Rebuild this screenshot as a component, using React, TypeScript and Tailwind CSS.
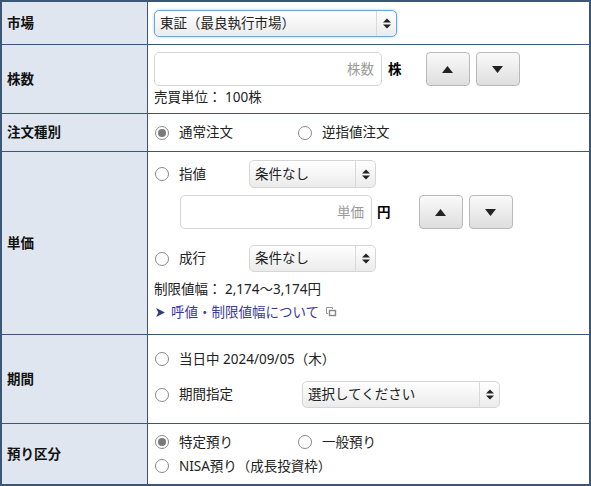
import clsx from 'clsx';

const font = { fontFamily: '"Noto Sans", "Noto Sans CJK JP", sans-serif' };

function UpDown() {
  return (
    <svg width="8" height="11" viewBox="0 0 8 11">
      <path d="M0 4.5 L4 0.5 L8 4.5 Z" fill="#222" />
      <path d="M0 6.5 L4 10.5 L8 6.5 Z" fill="#222" />
    </svg>
  );
}

function Select({ label, className, focused }: { label: string; className?: string; focused?: boolean }) {
  return (
    <div
      className={clsx(
        'flex items-stretch rounded-[5px] border bg-linear-to-b from-white to-[#ebebeb] text-[13.5px] text-[#222]',
        focused ? 'border-[#6aa7dd] shadow-[0_0_3px_#a6cdf0]' : 'border-[#d6d6d6]',
        className
      )}
    >
      <span className="flex flex-1 items-center pl-[5px]">{label}</span>
      <span className="flex w-[20px] items-center justify-center border-l border-[#d9d9d9]">
        <UpDown />
      </span>
    </div>
  );
}

function Radio({ checked }: { checked?: boolean }) {
  return (
    <span className="flex h-[14px] w-[14px] shrink-0 items-center justify-center rounded-full border border-[#8a8a8a] bg-white">
      {checked && <span className="h-[8px] w-[8px] rounded-full bg-[#7a7a7a]" />}
    </span>
  );
}

function RadioLabel({ checked, text }: { checked?: boolean; text: string }) {
  return (
    <span className="flex items-center gap-[10px]">
      <Radio checked={checked} />
      <span>{text}</span>
    </span>
  );
}

function TextBox({ placeholder, className }: { placeholder: string; className?: string }) {
  return (
    <div
      className={clsx(
        'flex h-[34px] items-center justify-end rounded-[5px] border border-[#d4d4d4] bg-white pr-[7px] text-[13.5px] text-[#9a9a9a]',
        className
      )}
    >
      {placeholder}
    </div>
  );
}

function Arrow({ up }: { up?: boolean }) {
  return (
    <div className="flex h-[34px] w-[44px] items-center justify-center rounded-[4px] border border-[#b9b9b9] bg-linear-to-b from-[#fafafa] to-[#dedede]">
      <svg width="11" height="7" viewBox="0 0 11 7">
        {up ? <path d="M0 7 L5.5 0 L11 7 Z" fill="#222" /> : <path d="M0 0 L5.5 7 L11 0 Z" fill="#222" />}
      </svg>
    </div>
  );
}

function Row({ label, height, children, last }: { label: string; height: string; children: React.ReactNode; last?: boolean }) {
  return (
    <div className={clsx('flex', height, !last && 'border-b border-[#3b5775]')}>
      <div className="flex w-[146px] shrink-0 items-center border-r border-[#3b5775] bg-[#dfe6f0] pl-[5px] text-[13.5px] font-bold text-[#111]">
        {label}
      </div>
      <div className="flex-1">{children}</div>
    </div>
  );
}

export default function App() {
  return (
    <div style={font} className="h-[486px] w-[591px] border-2 border-[#3b5775] bg-white text-[13.5px] text-[#222]">
      <Row label="市場" height="h-[43px]">
        <div className="pl-[6px] pt-[8px]">
          <Select label="東証（最良執行市場）" className="h-[27px] w-[243px]" focused />
        </div>
      </Row>

      <Row label="株数" height="h-[69px]">
        <div className="pl-[6px] pt-[7px]">
          <div className="flex items-center">
            <TextBox placeholder="株数" className="w-[228px]" />
            <span className="ml-[6px] font-bold text-black">株</span>
            <div className="ml-[24px] flex gap-[6px]">
              <Arrow up />
              <Arrow />
            </div>
          </div>
          <div className="mt-[2px] leading-[18px]">売買単位： 100株</div>
        </div>
      </Row>

      <Row label="注文種別" height="h-[38px]">
        <div className="flex h-full items-center pl-[7px]">
          <span className="w-[143px]">
            <RadioLabel checked text="通常注文" />
          </span>
          <RadioLabel text="逆指値注文" />
        </div>
      </Row>

      <Row label="単価" height="h-[183px]">
        <div className="pl-[7px] pt-[8px]">
          <div className="flex items-center">
            <span className="w-[94px]">
              <RadioLabel text="指値" />
            </span>
            <Select label="条件なし" className="h-[28px] w-[127px]" />
          </div>
          <div className="ml-[25px] mt-[7px] flex items-center">
            <TextBox placeholder="単価" className="w-[192px]" />
            <span className="ml-[5px] font-bold text-black">円</span>
            <div className="ml-[28px] flex gap-[6px]">
              <Arrow up />
              <Arrow />
            </div>
          </div>
          <div className="mt-[16px] flex items-center">
            <span className="w-[94px]">
              <RadioLabel text="成行" />
            </span>
            <Select label="条件なし" className="h-[27px] w-[127px]" />
          </div>
          <div className="-ml-[1px] mt-[8px] leading-[18px]">制限値幅： 2,174～3,174円</div>
          <div className="mt-[5px] flex items-center gap-[5px] leading-[18px] text-[#3a3a9a]">
            <svg width="11" height="11" viewBox="0 0 10 10">
              <path d="M1 1 L9 5 L1 9 L3 5 Z" fill="#2b3f73" />
            </svg>
            <span>呼値・制限値幅について</span>
            <svg width="11" height="10" viewBox="0 0 11 10" className="ml-[2px]">
              <path d="M0.5 0.5 H6.5 V2" stroke="#999" fill="none" />
              <path d="M0.5 0.5 V6.5 H2" stroke="#999" fill="none" />
              <rect x="3.5" y="3.5" width="6" height="5" stroke="#888" strokeWidth="1.4" fill="none" />
            </svg>
          </div>
        </div>
      </Row>

      <Row label="期間" height="h-[89px]">
        <div className="pl-[7px] pt-[15px]">
          <div className="flex h-[18px] items-center">
            <RadioLabel text="当日中 2024/09/05（木）" />
          </div>
          <div className="mt-[13px] flex items-center">
            <span className="w-[147px]">
              <RadioLabel text="期間指定" />
            </span>
            <Select label="選択してください" className="h-[27px] w-[198px]" />
          </div>
        </div>
      </Row>

      <Row label="預り区分" height="h-[60px]" last>
        <div className="pl-[7px] pt-[8px]">
          <div className="flex h-[20px] items-center">
            <span className="w-[143px]">
              <RadioLabel checked text="特定預り" />
            </span>
            <RadioLabel text="一般預り" />
          </div>
          <div className="mt-[4px] flex h-[20px] items-center">
            <RadioLabel text="NISA預り（成長投資枠）" />
          </div>
        </div>
      </Row>
    </div>
  );
}
